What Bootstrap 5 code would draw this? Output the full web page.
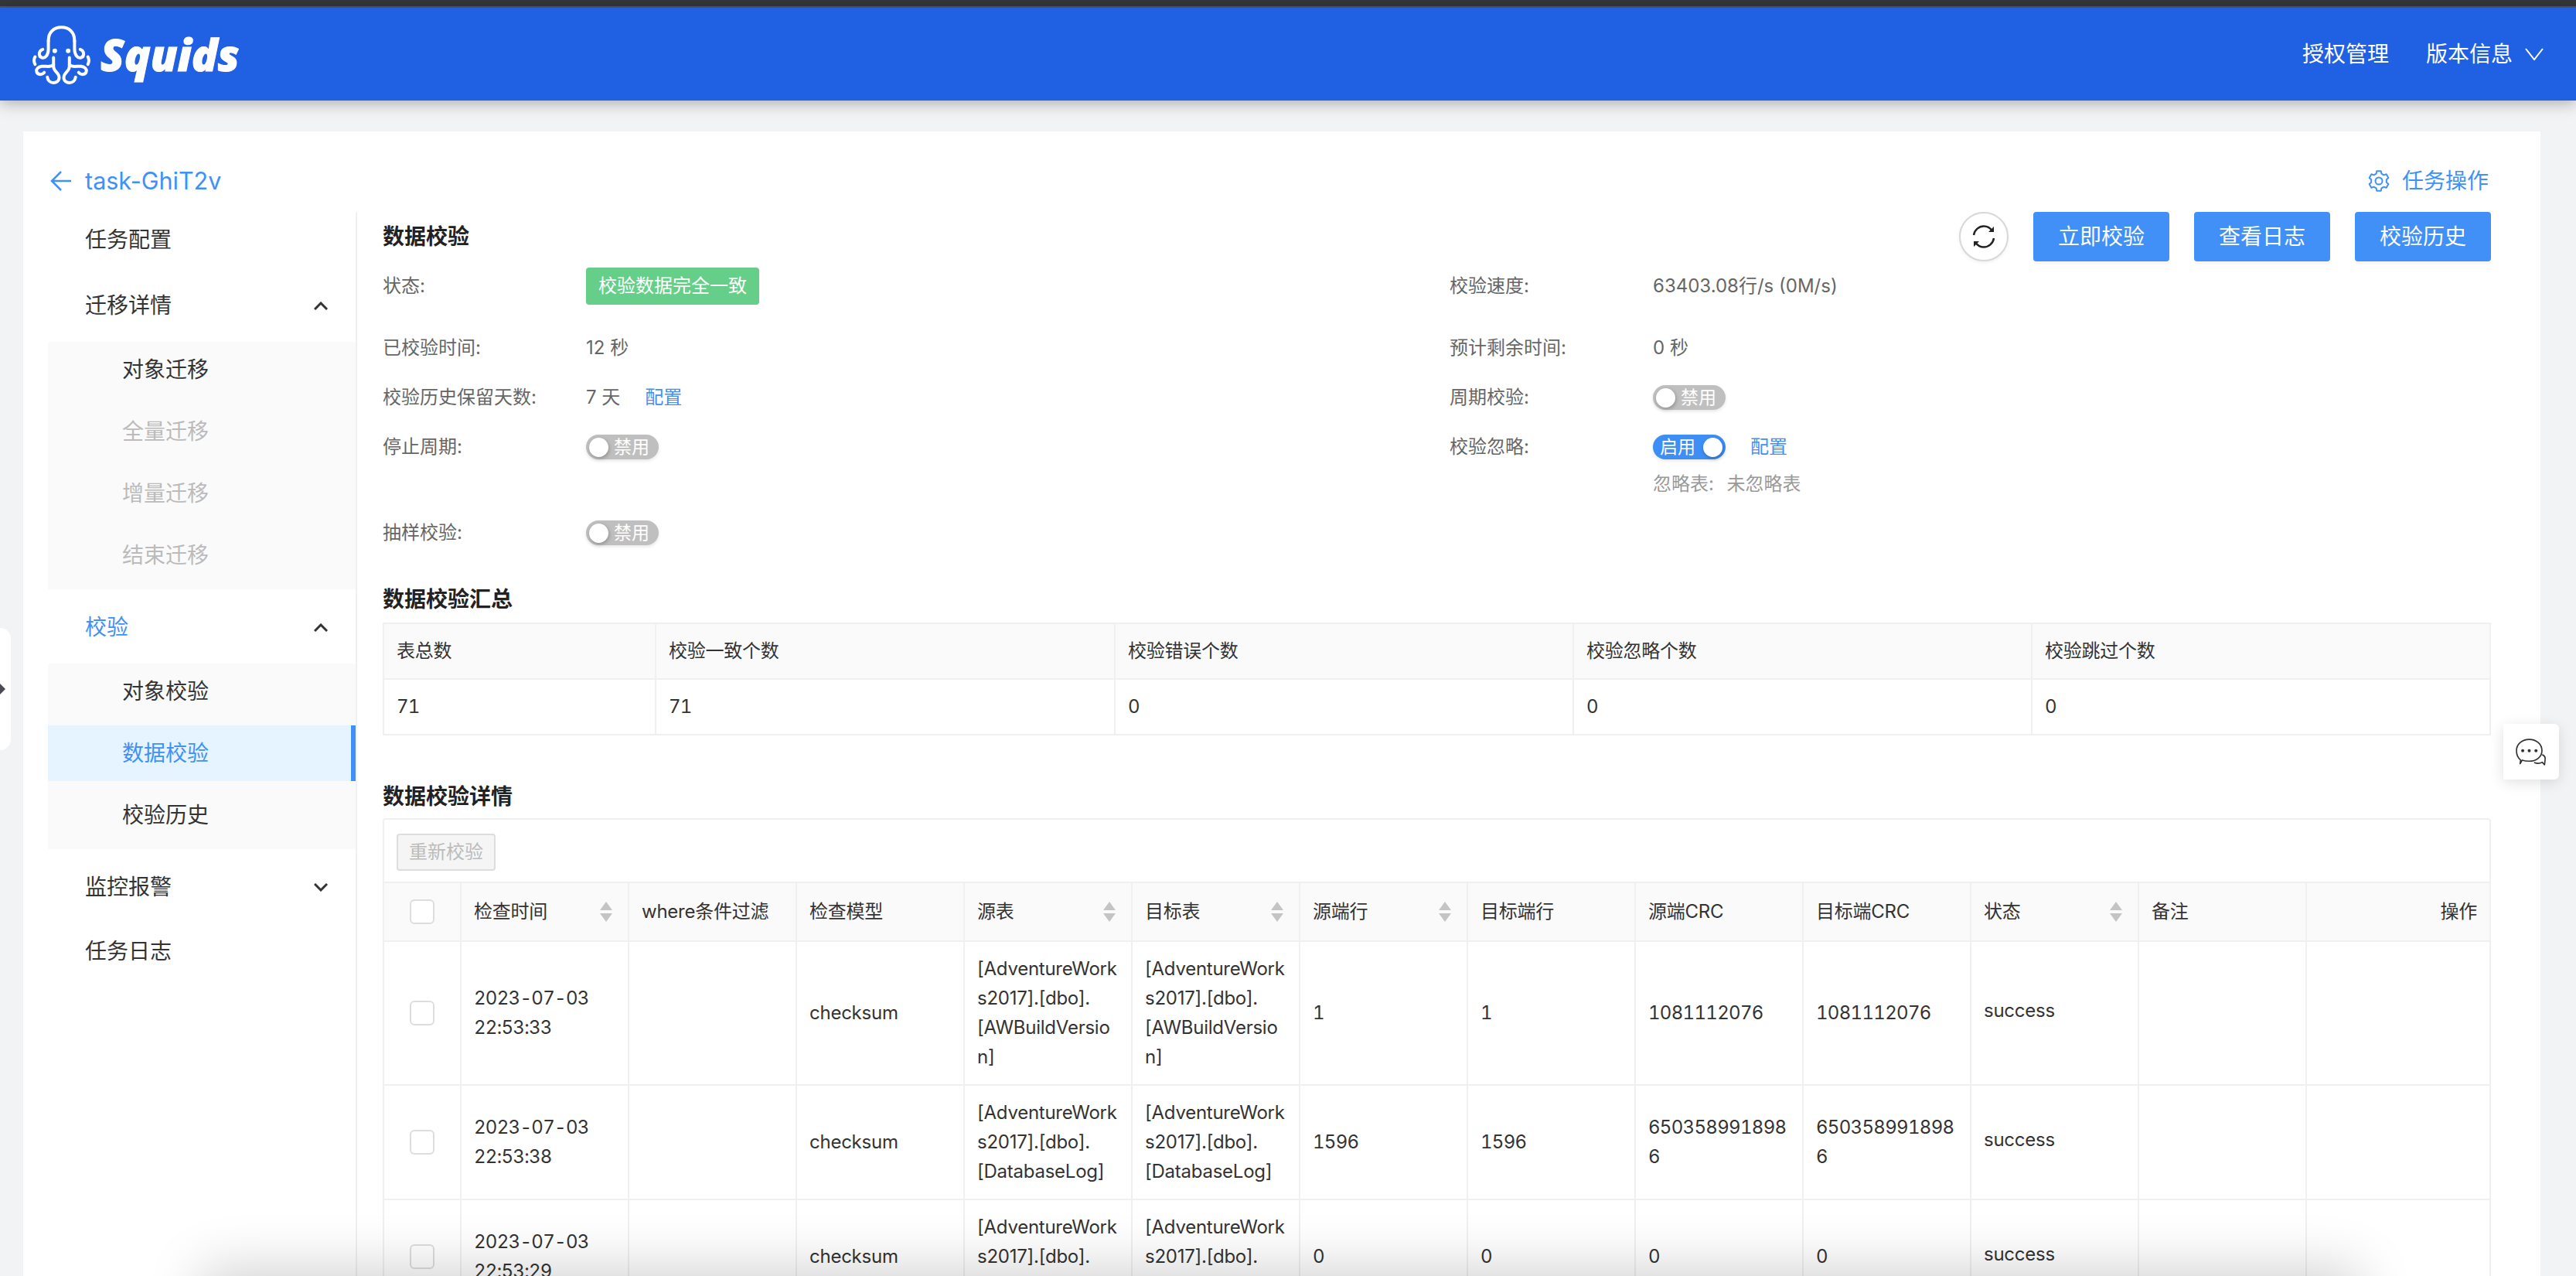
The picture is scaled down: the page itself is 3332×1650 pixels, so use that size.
<!DOCTYPE html>
<html lang="zh-CN">
<head>
  <meta charset="UTF-8">
  <title>Squids - 数据校验</title>
  <link href="https://cdn.jsdelivr.net/npm/bootstrap@5.3.3/dist/css/bootstrap.min.css" rel="stylesheet">
  <style>
    html, body {
      height: 100%;
      overflow: hidden;
    }
    body {
      font-family: Inter, "Noto Sans CJK SC", sans-serif;
      font-size: 24px;
      background-color: #f2f3f5;
      color: #333;
      position: relative;
    }
    .top-strip {
      height: 10px;
      background-color: #35363a;
      border-bottom: 2px solid #55565a;
    }
    .app-bar {
      height: 120px;
      background-color: #2060e2;
      color: #fff;
      padding: 0 42px 0 42px;
      box-shadow: 0 4px 18px rgba(0, 0, 0, .28);
      position: relative;
      z-index: 2;
    }
    .brand-name {
      font-family: "Open Sans", "Liberation Sans", sans-serif;
      font-size: 56px;
      font-weight: 800;
      font-style: italic;
      line-height: 1;
      margin-left: 11px;
      color: #fff;
      -webkit-text-stroke: 1px #fff;
    }
    .app-link {
      font-size: 28px;
      margin-left: 48px;
      color: #fff;
    }
    .task-panel {
      margin: 40px 46px 0 30px;
      background-color: #fff;
      height: 1480px;
    }
    .task-head {
      height: 104px;
      padding: 34px 67px 0 35px;
      font-size: 30.5px;
      line-height: 40px;
      color: #4090f7;
    }
    .task-action {
      font-size: 28px;
    }
    .task-head > div {
      height: 60px;
    }
    .back-name {
      margin-left: 18px;
    }
    .side-menu {
      width: 432px;
      flex-shrink: 0;
      margin-left: 0;
      padding-left: 32px;
      font-size: 28px;
      border-right: 2px solid #f0f0f0;
      height: 1400px;
    }
    .menu-item {
      height: 72px;
      padding: 0 36px 0 48px;
      color: #333;
    }
    .menu-group {
      height: 96px;
      padding-top: 2px;
    }
    .menu-open {
      color: #4090f7;
    }
    .sub-menu {
      display: flow-root;
      background-color: #fafafa;
      padding: 0;
    }
    .sub-item {
      height: 72px;
      margin-bottom: 8px;
      padding-left: 96px;
      color: #333;
    }
    .sub-off {
      color: #bbb;
    }
    .sub-active {
      background-color: #e6f4ff;
      color: #4090f7;
      border-right: 6px solid #4090f7;
    }
    .detail-pane {
      flex: 1 1 auto;
      min-width: 0;
      padding: 0 64px 0 33px;
    }
    .pane-title {
      font-size: 28px;
      font-weight: 700;
      line-height: 40px;
      color: #222;
      margin: 0;
    }
    .refresh-btn {
      width: 64px;
      height: 64px;
      border-radius: 50%;
      border: 2px solid #d8d8d8;
      background-color: #fff;
      padding: 0;
      margin-right: 32px;
      box-shadow: 0 2px 4px rgba(0, 0, 0, .06);
    }
    .btn-task {
      width: 176px;
      height: 64px;
      margin-left: 32px;
      padding: 0;
      font-size: 28px;
      color: #fff;
      background-color: #4090f7;
      border: 0;
      border-radius: 4px;
      box-shadow: 0 4px 0 rgba(0, 0, 0, .03);
    }
    .refresh-btn + .btn-task {
      margin-left: 0;
    }
    .info-left {
      width: 1380px;
      flex-shrink: 0;
    }
    .info-line {
      min-height: 48px;
      margin-bottom: 16px;
      color: #666;
    }
    .info-line.line-first {
      margin-top: 8px;
      margin-bottom: 32px;
    }
    .info-line.line-gap {
      margin-bottom: 63px;
    }
    .info-name {
      width: 263px;
      flex-shrink: 0;
    }
    .cfg-link {
      color: #4090f7;
      margin-left: 32px;
      text-decoration: none;
    }
    .state-tag {
      height: 48px;
      padding: 0 16px;
      border-radius: 4px;
      background-color: #65cf8a;
      color: #fff;
    }
    .ignore-note {
      color: #999;
      margin-top: 4px;
      line-height: 40px;
      word-spacing: 1.5px;
    }
    .toggle-pill {
      width: 94px;
      height: 32px;
      border-radius: 16px;
      background-color: #bfbfbf;
      color: #fff;
      font-size: 23px;
      line-height: 32px;
      padding: 0 12px 0 4px;
      box-shadow: 0 2px 4px rgba(0, 0, 0, .1);
    }
    .toggle-on {
      background-color: #3d8ef5;
      padding: 0 4px 0 9px;
    }
    .toggle-knob {
      width: 25px;
      height: 25px;
      border-radius: 50%;
      background-color: #fff;
      box-shadow: 1px 2px 5px rgba(0, 0, 0, .25);
    }
    .sum-title {
      margin: 42px 0 10px;
    }
    .detail-title {
      margin: 59px 0 8px;
    }
    .table.data-grid {
      table-layout: fixed;
      margin-bottom: 0;
      font-size: 24px;
      letter-spacing: -.25px;
      color: #333;
    }
    .table.data-grid > :not(caption) > * > * {
      border: 2px solid #f0f0f0;
      padding: 16px;
      line-height: 38px;
      vertical-align: middle;
      word-break: break-all;
      font-weight: 400;
      background-color: transparent;
      box-shadow: none;
      color: #333;
    }
    .table.data-grid > thead > tr > * {
      background-color: #fafafa;
      height: 76px;
    }
    .table.data-grid.sum-grid > thead > tr > * {
      height: 72px;
    }
    .table.data-grid.sum-grid > tbody > tr > * {
      height: 71px;
    }
    .table.data-grid .num-cell {
      font-variant-numeric: tabular-nums;
      letter-spacing: -.7px;
    }
    .grid-bar {
      height: 82px;
      padding: 18px 16px 0;
      border: 2px solid #f0f0f0;
      border-bottom: 0;
      border-radius: 4px 4px 0 0;
    }
    .btn-redo {
      width: 128px;
      height: 48px;
      padding: 0;
      font-size: 24px;
      color: #bbb;
      background-color: #f5f5f5;
      border: 2px solid #ddd;
      border-radius: 4px;
    }
    .btn-redo:disabled {
      color: #bbb;
      background-color: #f5f5f5;
      border-color: #ddd;
      opacity: 1;
    }
    .row-check {
      width: 32px;
      height: 32px;
      margin: 0;
      display: block;
      margin-left: auto;
      margin-right: auto;
      float: none;
      border: 2px solid #ddd;
      border-radius: 4px;
    }
    .sort-arrows {
      display: flex;
      flex-direction: column;
      gap: 4px;
      margin-right: 4px;
    }
    .sort-up, .sort-down {
      width: 0;
      height: 0;
      border-left: 8px solid transparent;
      border-right: 8px solid transparent;
    }
    .sort-up {
      border-bottom: 11px solid #c4c4c4;
    }
    .sort-down {
      border-top: 11px solid #c4c4c4;
    }
    .state-text {
      display: block;
      padding-bottom: 6px;
    }
    .side-handle {
      position: absolute;
      left: 0;
      top: 812px;
      width: 14px;
      height: 158px;
      background-color: #fff;
      border-radius: 0 14px 14px 0;
      z-index: 3;
    }
    .side-handle::after {
      content: "";
      position: absolute;
      left: 0;
      top: 72px;
      border-left: 7px solid #4a4a55;
      border-top: 7px solid transparent;
      border-bottom: 7px solid transparent;
    }
    .chat-float {
      position: absolute;
      left: 3238px;
      top: 936px;
      width: 72px;
      height: 72px;
      background-color: #fff;
      border-radius: 0 6px 6px 0;
      box-shadow: 0 4px 18px rgba(0, 0, 0, .12);
      z-index: 3;
    }
    .window-shade {
      position: absolute;
      left: 300px;
      right: 320px;
      top: 1680px;
      height: 40px;
      box-shadow: 0 0 70px 40px rgba(0, 0, 0, .18);
      pointer-events: none;
      z-index: 4;
    }
  </style>
</head>
<body>
  <div class="top-strip"></div>

  <header class="app-bar d-flex align-items-center">
    <svg width="77" height="79" viewBox="36 30 232 236" fill="none" stroke="#fff" stroke-width="12" stroke-linecap="round">
      <g id="arm">
        <path d="M98 95 V128 C98 150 85 165 72 160 C58 155 60 132 76 128"/>
        <path d="M118 160 V195 C118 215 140 218 140 238 C140 252 128 258 118 258 C106 258 96 250 94 236"/>
        <path d="M118 188 C105 200 90 192 72 194 C58 196 50 205 52 214 C54 226 72 230 82 218"/>
        <path d="M46 157 C41 166 41 176 46 186"/>
        <circle cx="123" cy="134" r="9" fill="#fff" stroke="none"/>
      </g>
      <use href="#arm" transform="translate(298 0) scale(-1 1)"/>
      <path d="M98 95 C98 60 120 42 149 42 C178 42 200 60 200 95"/>
    </svg>
    <span class="brand-name">Squids</span>
    <div class="ms-auto d-flex align-items-center">
      <span class="app-link">授权管理</span>
      <span class="app-link">版本信息</span>
      <svg class="ms-3" width="24" height="16" viewBox="0 0 24 16" fill="none" stroke="#fff" stroke-width="2">
        <path d="M1 1 L12 15 L23 1"/>
      </svg>
    </div>
  </header>

  <main class="task-panel">
    <div class="task-head d-flex justify-content-between">
      <div class="d-flex align-items-center">
        <svg width="27" height="28" viewBox="0 0 27 28" fill="none" stroke="#4090f7" stroke-width="2.5">
          <path d="M14 2 L2 14 L14 26 M2 14 H27"/>
        </svg>
        <span class="back-name">task-GhiT2v</span>
      </div>
      <div class="task-action d-flex align-items-center">
        <svg class="me-3" width="28" height="28" viewBox="0 0 28 28" fill="none" stroke="#4090f7" stroke-width="2" stroke-linejoin="round">
          <path d="M10.58 4.6 L11.3 1.28 H16.7 L17.42 4.6 L20.43 6.34 L23.66 5.3 L26.36 9.98 L23.85 12.26 V15.74 L26.36 18.02 L23.66 22.7 L20.43 21.66 L17.42 23.4 L16.7 26.72 H11.3 L10.58 23.4 L7.57 21.66 L4.34 22.7 L1.64 18.02 L4.15 15.74 V12.26 L1.64 9.98 L4.34 5.3 L7.57 6.34 Z"/>
          <circle cx="14" cy="14" r="4.5"/>
        </svg>
        <span>任务操作</span>
      </div>
    </div>

    <div class="d-flex">
      <nav class="side-menu">
        <div class="menu-item d-flex align-items-center">任务配置</div>
        <div class="menu-item menu-group d-flex align-items-center justify-content-between">
          <span>迁移详情</span>
          <svg width="18" height="11" viewBox="0 0 18 11" fill="none" stroke="#333" stroke-width="3"><path d="M1 10 L9 2 L17 10"/></svg>
        </div>
        <div class="sub-menu">
          <div class="sub-item d-flex align-items-center">对象迁移</div>
          <div class="sub-item sub-off d-flex align-items-center">全量迁移</div>
          <div class="sub-item sub-off d-flex align-items-center">增量迁移</div>
          <div class="sub-item sub-off d-flex align-items-center">结束迁移</div>
        </div>
        <div class="menu-item menu-group d-flex align-items-center justify-content-between">
          <span class="menu-open">校验</span>
          <svg width="18" height="11" viewBox="0 0 18 11" fill="none" stroke="#333" stroke-width="3"><path d="M1 10 L9 2 L17 10"/></svg>
        </div>
        <div class="sub-menu">
          <div class="sub-item d-flex align-items-center">对象校验</div>
          <div class="sub-item sub-active d-flex align-items-center">数据校验</div>
          <div class="sub-item d-flex align-items-center">校验历史</div>
        </div>
        <div class="menu-item menu-group d-flex align-items-center justify-content-between">
          <span>监控报警</span>
          <svg width="18" height="11" viewBox="0 0 18 11" fill="none" stroke="#333" stroke-width="3"><path d="M1 1 L9 9 L17 1"/></svg>
        </div>
        <div class="menu-item d-flex align-items-center">任务日志</div>
      </nav>

      <section class="detail-pane">
        <div class="d-flex justify-content-between align-items-center">
          <h5 class="pane-title">数据校验</h5>
          <div class="d-flex align-items-center">
            <button class="refresh-btn d-flex align-items-center justify-content-center" type="button" aria-label="刷新">
              <svg width="32" height="32" viewBox="0 0 32 32" fill="none" stroke="#222" stroke-width="2.5">
                <path d="M3 14 C4 7 10 2.5 16 2.5 C20 2.5 24 4.5 26.5 8"/>
                <path d="M29 18 C28 25 22 29.5 16 29.5 C12 29.5 8 27.5 5.5 24"/>
                <path d="M29 3 V10 H22 Z M3 29 V22 H10 Z" fill="#222" stroke="none"/>
              </svg>
            </button>
            <button class="btn btn-task" type="button">立即校验</button>
            <button class="btn btn-task" type="button">查看日志</button>
            <button class="btn btn-task" type="button">校验历史</button>
          </div>
        </div>

        <div class="d-flex">
          <div class="info-left">
            <div class="info-line line-first d-flex align-items-center">
              <span class="info-name">状态:</span>
              <span class="state-tag d-inline-flex align-items-center">校验数据完全一致</span>
            </div>
            <div class="info-line d-flex align-items-center">
              <span class="info-name">已校验时间:</span>
              <span>12 秒</span>
            </div>
            <div class="info-line d-flex align-items-center">
              <span class="info-name">校验历史保留天数:</span>
              <span>7 天</span>
              <a class="cfg-link" href="#">配置</a>
            </div>
            <div class="info-line line-gap d-flex align-items-center">
              <span class="info-name">停止周期:</span>
              <span class="toggle-pill d-flex align-items-center justify-content-between"><span class="toggle-knob"></span><span>禁用</span></span>
            </div>
            <div class="info-line d-flex align-items-center mb-0">
              <span class="info-name">抽样校验:</span>
              <span class="toggle-pill d-flex align-items-center justify-content-between"><span class="toggle-knob"></span><span>禁用</span></span>
            </div>
          </div>
          <div class="flex-grow-1">
            <div class="info-line line-first d-flex align-items-center">
              <span class="info-name">校验速度:</span>
              <span>63403.08行/s (0M/s)</span>
            </div>
            <div class="info-line d-flex align-items-center">
              <span class="info-name">预计剩余时间:</span>
              <span>0 秒</span>
            </div>
            <div class="info-line d-flex align-items-center">
              <span class="info-name">周期校验:</span>
              <span class="toggle-pill d-flex align-items-center justify-content-between"><span class="toggle-knob"></span><span>禁用</span></span>
            </div>
            <div class="info-line d-flex align-items-center mb-0">
              <span class="info-name">校验忽略:</span>
              <span class="toggle-pill toggle-on d-flex align-items-center justify-content-between"><span>启用</span><span class="toggle-knob"></span></span>
              <a class="cfg-link" href="#">配置</a>
            </div>
            <div class="d-flex">
              <span class="info-name"></span>
              <span class="ignore-note">忽略表:&nbsp; 未忽略表</span>
            </div>
          </div>
        </div>

        <h5 class="pane-title sum-title">数据校验汇总</h5>
        <table class="table data-grid sum-grid">
          <colgroup>
            <col style="width: 352px"><col style="width: 594px"><col style="width: 593px"><col style="width: 593px"><col>
          </colgroup>
          <thead>
            <tr><th>表总数</th><th>校验一致个数</th><th>校验错误个数</th><th>校验忽略个数</th><th>校验跳过个数</th></tr>
          </thead>
          <tbody>
            <tr><td class="num-cell">71</td><td class="num-cell">71</td><td class="num-cell">0</td><td class="num-cell">0</td><td class="num-cell">0</td></tr>
          </tbody>
        </table>

        <h5 class="pane-title detail-title">数据校验详情</h5>
        <div class="grid-bar">
          <button class="btn btn-redo" type="button" disabled>重新校验</button>
        </div>
        <table class="table data-grid">
          <colgroup>
            <col style="width: 100px">
            <col style="width: 217px"><col style="width: 217px"><col style="width: 217px"><col style="width: 217px">
            <col style="width: 217px"><col style="width: 217px"><col style="width: 217px"><col style="width: 217px">
            <col style="width: 217px"><col style="width: 217px"><col style="width: 217px"><col>
          </colgroup>
          <thead>
            <tr>
              <th><input class="form-check-input row-check" type="checkbox" aria-label="全选"></th>
              <th><div class="d-flex justify-content-between align-items-center"><span>检查时间</span><span class="sort-arrows"><i class="sort-up"></i><i class="sort-down"></i></span></div></th>
              <th>where条件过滤</th>
              <th>检查模型</th>
              <th><div class="d-flex justify-content-between align-items-center"><span>源表</span><span class="sort-arrows"><i class="sort-up"></i><i class="sort-down"></i></span></div></th>
              <th><div class="d-flex justify-content-between align-items-center"><span>目标表</span><span class="sort-arrows"><i class="sort-up"></i><i class="sort-down"></i></span></div></th>
              <th><div class="d-flex justify-content-between align-items-center"><span>源端行</span><span class="sort-arrows"><i class="sort-up"></i><i class="sort-down"></i></span></div></th>
              <th>目标端行</th>
              <th>源端CRC</th>
              <th>目标端CRC</th>
              <th><div class="d-flex justify-content-between align-items-center"><span>状态</span><span class="sort-arrows"><i class="sort-up"></i><i class="sort-down"></i></span></div></th>
              <th>备注</th>
              <th class="text-end">操作</th>
            </tr>
          </thead>
          <tbody>
            <tr>
              <td><input class="form-check-input row-check" type="checkbox" aria-label="选择"></td>
              <td class="num-cell">2023-07-03<br>22:53:33</td>
              <td></td>
              <td>checksum</td>
              <td>[AdventureWorks2017].[dbo].<br>[AWBuildVersion]</td>
              <td>[AdventureWorks2017].[dbo].<br>[AWBuildVersion]</td>
              <td class="num-cell">1</td>
              <td class="num-cell">1</td>
              <td class="num-cell">1081112076</td>
              <td class="num-cell">1081112076</td>
              <td><span class="state-text">success</span></td>
              <td></td>
              <td></td>
            </tr>
            <tr>
              <td><input class="form-check-input row-check" type="checkbox" aria-label="选择"></td>
              <td class="num-cell">2023-07-03<br>22:53:38</td>
              <td></td>
              <td>checksum</td>
              <td>[AdventureWorks2017].[dbo].<br>[DatabaseLog]</td>
              <td>[AdventureWorks2017].[dbo].<br>[DatabaseLog]</td>
              <td class="num-cell">1596</td>
              <td class="num-cell">1596</td>
              <td class="num-cell">6503589918986</td>
              <td class="num-cell">6503589918986</td>
              <td><span class="state-text">success</span></td>
              <td></td>
              <td></td>
            </tr>
            <tr>
              <td><input class="form-check-input row-check" type="checkbox" aria-label="选择"></td>
              <td class="num-cell">2023-07-03<br>22:53:29</td>
              <td></td>
              <td>checksum</td>
              <td>[AdventureWorks2017].[dbo].<br>[ErrorLog]</td>
              <td>[AdventureWorks2017].[dbo].<br>[ErrorLog]</td>
              <td class="num-cell">0</td>
              <td class="num-cell">0</td>
              <td class="num-cell">0</td>
              <td class="num-cell">0</td>
              <td><span class="state-text">success</span></td>
              <td></td>
              <td></td>
            </tr>
          </tbody>
        </table>
      </section>
    </div>
  </main>

  <div class="side-handle"></div>
  <div class="chat-float d-flex align-items-center justify-content-center">
    <svg width="42" height="37" viewBox="100 100 125 110" fill="none" stroke="#333" stroke-width="5" stroke-linejoin="round">
      <path d="M122 186 C112 178 106 165 106 150 C106 124 128 106 155 106 C182 106 204 124 204 150 C204 174 182 190 155 190 C146 190 136 189 128 186 L120 200 Z"/>
      <path d="M205 165 C214 168 218 176 216 186 L214 204 L205 194 C195 200 184 199 174 195"/>
      <circle cx="130" cy="150" r="6" fill="#333" stroke="none"/>
      <circle cx="155" cy="150" r="6" fill="#333" stroke="none"/>
      <circle cx="181" cy="150" r="6" fill="#333" stroke="none"/>
    </svg>
  </div>
  <div class="window-shade"></div>

  <script src="https://cdn.jsdelivr.net/npm/bootstrap@5.3.3/dist/js/bootstrap.bundle.min.js"></script>
</body>
</html>
